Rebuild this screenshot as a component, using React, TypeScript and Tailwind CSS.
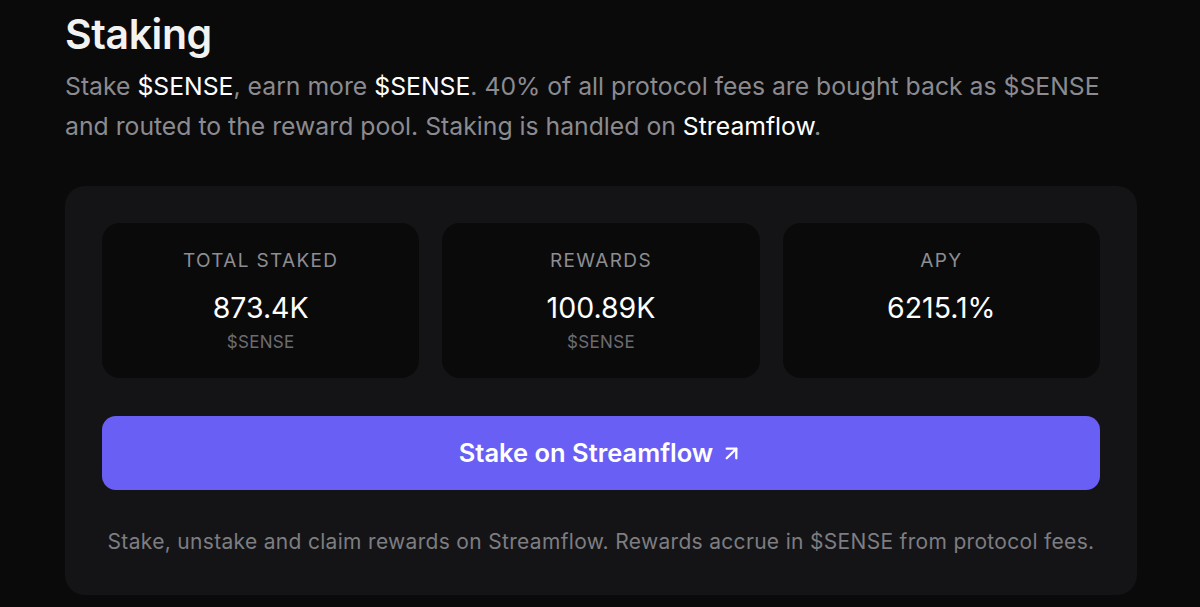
import { ArrowUpRight } from "lucide-react";

type Stat = {
  label: string;
  value: string;
  unit?: string;
};

const stats: Stat[] = [
  { label: "Total Staked", value: "873.4K", unit: "$SENSE" },
  { label: "Rewards", value: "100.89K", unit: "$SENSE" },
  { label: "APY", value: "6215.1%" },
];

function StatBox({ stat }: { stat: Stat }) {
  return (
    <div className="flex h-[155px] flex-col items-center rounded-[18px] bg-[#0a0a0b] pt-[24px]">
      <span className="text-[19px] leading-[28px] uppercase tracking-[0.07em] text-[#8d8d92]">
        {stat.label}
      </span>
      <span className="mt-[15px] text-[28.5px] leading-[36px] text-white">{stat.value}</span>
      {stat.unit && (
        <span className="mt-[4px] text-[17px] leading-[24px] tracking-[0.02em] text-[#6c6c71]">
          {stat.unit}
        </span>
      )}
    </div>
  );
}

export default function App() {
  return (
    <div
      className="min-h-[607px] w-full overflow-hidden bg-[#0a0a0b] px-[65px] pt-[8px]"
      style={{ fontFamily: "Inter, 'Noto Sans', sans-serif" }}
    >
      {/* Header */}
      <h1 className="text-[41px] leading-[52px] font-semibold tracking-[-0.01em] text-[#f2f2f3]">
        Staking
      </h1>
      <p className="mt-[6px] max-w-[1050px] text-[24.75px] leading-[40px] text-[#8b8b90]">
        Stake <span className="text-white">$SENSE</span>, earn more{" "}
        <span className="text-white">$SENSE</span>. 40% of all protocol fees are bought back as
        $SENSE and routed to the reward pool. Staking is handled on{" "}
        <span className="text-white">Streamflow</span>.
      </p>

      {/* Staking card */}
      <div className="mt-[40px] w-[1072px] rounded-[20px] bg-[#141416] px-[37px] pt-[37px] pb-[38px]">
        <div className="grid grid-cols-3 gap-[23px]">
          {stats.map((s) => (
            <StatBox key={s.label} stat={s} />
          ))}
        </div>

        <button className="mt-[38px] flex h-[74px] w-full items-center justify-center gap-[7px] rounded-[14px] bg-[#6a5ff4] text-[25.5px] font-semibold text-white">
          Stake on Streamflow
          <ArrowUpRight size={23} strokeWidth={2.4} />
        </button>

        <p className="mt-[37px] text-center text-[21px] leading-[30px] tracking-[0.015em] text-[#7d7d82]">
          Stake, unstake and claim rewards on Streamflow. Rewards accrue in $SENSE from protocol
          fees.
        </p>
      </div>
    </div>
  );
}
